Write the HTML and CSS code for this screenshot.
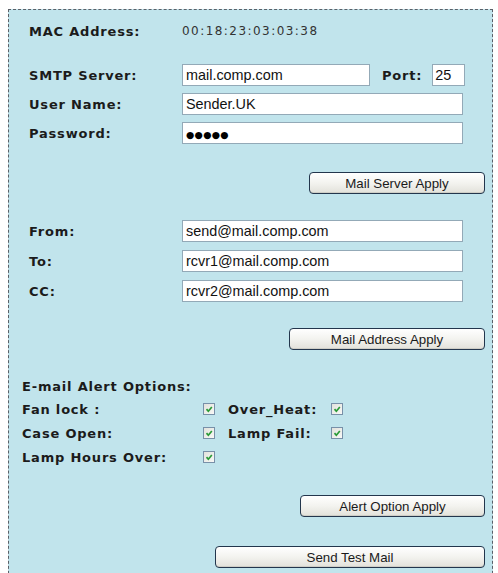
FILE: index.html
```html
<!DOCTYPE html>
<html lang="en">
<head>
<meta charset="utf-8">
<title>E-mail Settings</title>
<link rel="stylesheet" href="styles.css">
</head>
<body>
<div class="panel">
  <div class="row mac-row">
    <span class="lbl">MAC Address:</span>
    <span class="mac-val">00:18:23:03:03:38</span>
  </div>

  <div class="group server">
    <div class="row">
      <label class="lbl">SMTP Server:</label>
      <input class="field smtp" type="text" value="mail.comp.com">
      <label class="lbl port-lbl">Port:</label>
      <input class="field port" type="text" value="25">
    </div>
    <div class="row">
      <label class="lbl">User Name:</label>
      <input class="field wide" type="text" value="Sender.UK">
    </div>
    <div class="row">
      <label class="lbl">Password:</label>
      <div class="field wide pass">●●●●●</div>
    </div>
  </div>

  <div class="actions a1"><button class="btn b-server">Mail Server Apply</button></div>

  <div class="group address">
    <div class="row">
      <label class="lbl">From:</label>
      <input class="field wide" type="text" value="send@mail.comp.com">
    </div>
    <div class="row">
      <label class="lbl">To:</label>
      <input class="field wide" type="text" value="rcvr1@mail.comp.com">
    </div>
    <div class="row">
      <label class="lbl">CC:</label>
      <input class="field wide" type="text" value="rcvr2@mail.comp.com">
    </div>
  </div>

  <div class="actions a2"><button class="btn b-address">Mail Address Apply</button></div>

  <div class="alerts">
    <div class="alert-title">E-mail Alert Options:</div>
    <div class="arow">
      <span class="albl">Fan lock :</span>
      <span class="chk"><svg viewBox="0 0 12 12" width="12" height="12"><path d="M3 6.2 L5.2 8.6 L9.4 3.6" /></svg></span>
      <span class="albl2">Over_Heat:</span>
      <span class="chk"><svg viewBox="0 0 12 12" width="12" height="12"><path d="M3 6.2 L5.2 8.6 L9.4 3.6" /></svg></span>
    </div>
    <div class="arow">
      <span class="albl">Case Open:</span>
      <span class="chk"><svg viewBox="0 0 12 12" width="12" height="12"><path d="M3 6.2 L5.2 8.6 L9.4 3.6" /></svg></span>
      <span class="albl2">Lamp Fail:</span>
      <span class="chk"><svg viewBox="0 0 12 12" width="12" height="12"><path d="M3 6.2 L5.2 8.6 L9.4 3.6" /></svg></span>
    </div>
    <div class="arow">
      <span class="albl">Lamp Hours Over:</span>
      <span class="chk"><svg viewBox="0 0 12 12" width="12" height="12"><path d="M3 6.2 L5.2 8.6 L9.4 3.6" /></svg></span>
    </div>
  </div>

  <div class="actions a3"><button class="btn b-alert">Alert Option Apply</button></div>
  <div class="actions a4"><button class="btn b-test">Send Test Mail</button></div>
</div>
</body>
</html>
```

FILE: styles.css
```css
* { box-sizing: border-box; }

html, body { overflow: hidden; }

body {
  margin: 9px 0 0 8px;
  background: #ffffff;
  font-family: "DejaVu Sans", Verdana, sans-serif;
  color: #1b1b1b;
}

.panel {
  width: 485px;
  border: 1px dashed #5a6068;
  background: #c1e4ec;
  padding: 10px 7px 40px 20px;
}

.row {
  display: flex;
  align-items: center;
  height: 22px;
}

.lbl {
  width: 153px;
  flex: none;
  font-size: 13px;
  font-weight: bold;
  letter-spacing: 0.8px;
  color: #1b1b1b;
}

.mac-val {
  font-size: 12px;
  letter-spacing: 1.45px;
  color: #333;
}

.group.server { margin-top: 22px; }
.group .row + .row { margin-top: 7px; }
.group.address { margin-top: 26px; }
.group.address .row + .row { margin-top: 8px; }

.field {
  height: 22px;
  border: 1px solid #93a9b7;
  background: #fff;
  font-family: "Liberation Sans", Arial, sans-serif;
  font-size: 14.4px;
  color: #111;
  padding: 0 2px 0 3px;
  margin: 0;
  outline: none;
}

.smtp { width: 188px; }
.wide { width: 281px; }
.port { width: 33px; padding-left: 2px; }

.port-lbl {
  width: auto;
  margin-left: 12px;
  margin-right: 10px;
}

.pass {
  display: flex;
  align-items: center;
  font-family: "DejaVu Sans", sans-serif;
  font-size: 9.5px;
  letter-spacing: 0.3px;
  color: #000;
  padding-left: 3px;
  padding-top: 2px;
}

.actions {
  display: flex;
  justify-content: flex-end;
}
.a1 { margin-top: 28px; }
.a2 { margin-top: 26px; }
.a3 { margin-top: 26px; }
.a4 { margin-top: 29px; }

.btn {
  height: 22px;
  border: 1px solid #23364d;
  border-radius: 4px;
  background: linear-gradient(#ffffff, #f3f3ef 50%, #e2e1da);
  box-shadow: inset 0 -1px 0 #cfcec6;
  font-family: "Liberation Sans", Arial, sans-serif;
  font-size: 13.3px;
  color: #1a1a1a;
  padding: 0;
  margin: 0;
}
.b-server { width: 176px; }
.b-address { width: 196px; }
.b-alert { width: 185px; }
.b-test { width: 270px; }

.alerts {
  margin-top: 27px;
  margin-left: -7px;
}

.alert-title {
  height: 20px;
  line-height: 20px;
  font-size: 13px;
  font-weight: bold;
  letter-spacing: 0.8px;
}

.arow {
  display: flex;
  align-items: center;
  height: 24px;
}

.albl, .albl2 {
  font-size: 13px;
  font-weight: bold;
  letter-spacing: 0.8px;
  flex: none;
}
.albl { width: 181px; }
.albl2 { width: 103px; margin-left: 13px; }

.chk {
  width: 12px;
  height: 12px;
  flex: none;
  border: 1px solid #7890a8;
  background: linear-gradient(135deg, #e2e2dc, #f8f8f6);
  display: flex;
  align-items: center;
  justify-content: center;
}
.chk svg {
  display: block;
  width: 10px;
  height: 10px;
}
.chk path {
  fill: none;
  stroke: #2a9a36;
  stroke-width: 2;
}
```
